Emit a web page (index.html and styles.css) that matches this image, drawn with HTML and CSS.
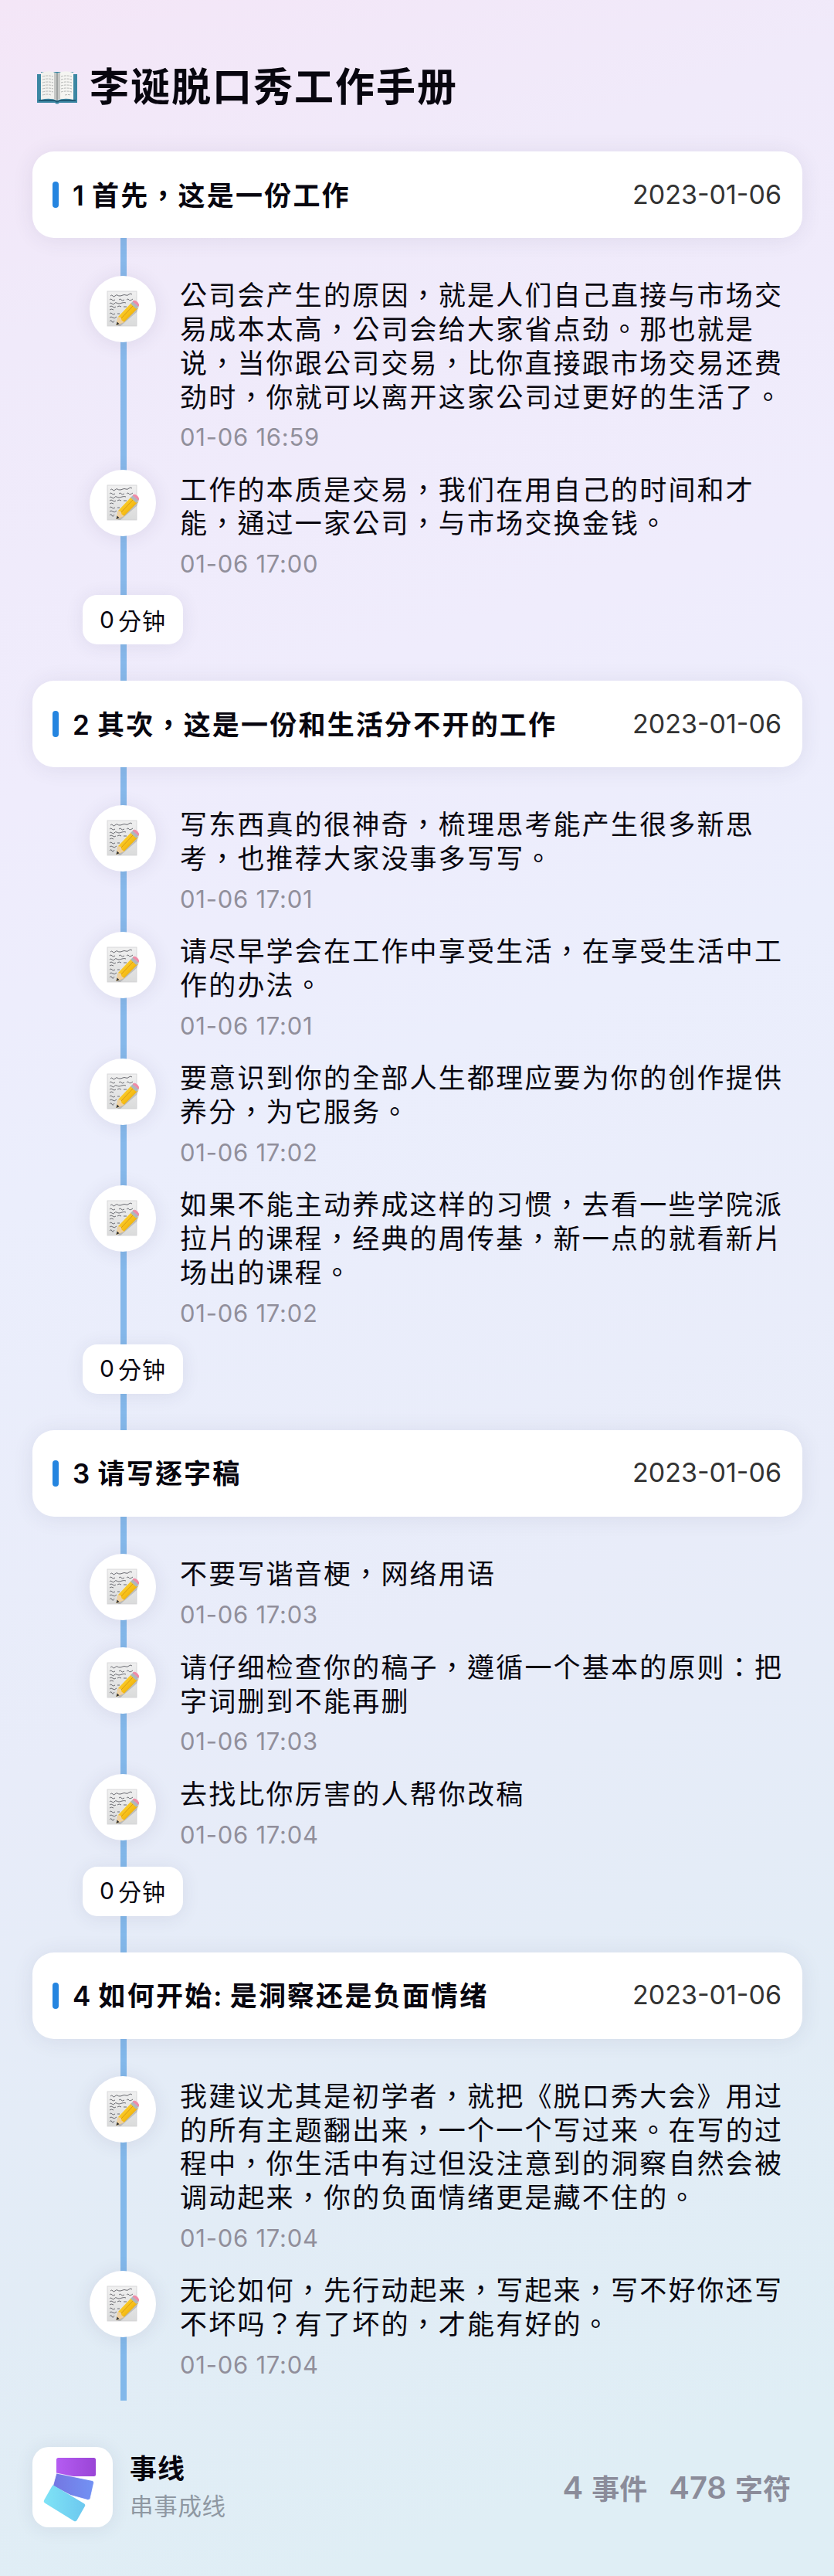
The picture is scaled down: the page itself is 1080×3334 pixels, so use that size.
FILE: index.html
```html
<!DOCTYPE html>
<html lang="zh-TW">
<head>
<meta charset="utf-8">
<title>李诞脱口秀工作手册</title>
<link rel="stylesheet" href="styles.css">
</head>
<body>
<svg class="defs" width="0" height="0">
  <defs>
    <linearGradient id="pencil" x1="0" y1="0" x2="1" y2="1"><stop offset="0" stop-color="#ffdf45"/><stop offset=".55" stop-color="#f6bd16"/><stop offset="1" stop-color="#b97a10"/></linearGradient>
    <linearGradient id="sheet" x1="0" y1="0" x2="0" y2="1"><stop offset="0" stop-color="#f0f0f0"/><stop offset="1" stop-color="#dadbdb"/></linearGradient>
    <symbol id="memo" viewBox="0 0 42 48">
      <rect x="1" y="1" width="38" height="45" fill="url(#sheet)" stroke="#d2d3d4" stroke-width=".8"/>
      <g fill="none" stroke="#6b6c72" stroke-width="1">
        <path d="M5 7q2-2 3 0t3 0 3-1 3 1 4-1 4 0 4-1 4 0"/>
        <path d="M4 12q2-2 3 0t4 0M16 12q2-2 3 0t4 0M26 12q2-2 3 0t5-1"/>
        <path d="M4 17q1-2 3 0t3 0 3-1 3 1 4-1 5 0"/>
        <path d="M4 21q2-2 4 0t4 0M14 21q2-2 5 0M22 21h4"/>
        <path d="M4 25q2-2 5 0"/>
        <path d="M4 30q2-2 3 0t4 0M14 30h3"/>
        <path d="M4 35q2-2 4 0t5-1M4 40q2-3 3 0t3-1"/>
      </g>
      <path d="M14 46l23-22 5-3-3 7-21 18z" fill="#6b6b6b" opacity=".3"/>
      <path d="M12.500 45l2.500-11 17-18 8.500 7-18 18z" fill="url(#pencil)"/>
      <path d="M12.500 45l2.500-11 3.500 1 1 3.500 3.500 2.500z" fill="#efd0a0"/>
      <path d="M12.500 45l1.100-4.500 3 2.700z" fill="#333"/>
      <path d="M31 17l3-3 7.500 6.500-3 3.500z" fill="#aeb7bd"/>
      <path d="M34 14q2.500-2 5.500 .8t1.800 5.500z" fill="#ef8ba6" stroke="#ef8ba6"/>
      <path d="M19 36l15-16" stroke="#d99a14" stroke-width="1"/>
    </symbol>
  </defs>
</svg>
<main class="page">
  <h1 class="title">
    <svg class="book" viewBox="0 0 52 44">
      <path d="M0 5h5V2h42v3h5v37H29q-3 3-6 0H0z" fill="#3c87a3"/>
      <path d="M2 38h21q3 3 6 0h21v2H29q-3 3-6 0H2z" fill="#205a73"/>
      <path d="M5 3q12-4 21 1v35q-9-4-21-1z" fill="#f1f1ee"/>
      <path d="M47 3q-12-4-21 1v35q9-4 21-1z" fill="#f5f5f2"/>
      <path d="M22 3q3 0 4 2 1-2 4-2v34q-3 0-4 2-1-2-4-2z" fill="#c5c7c5"/>
      <path d="M26 4v35" stroke="#777c7c"/>
      <path d="M7 8q7-2 14 0M7 12q7-2 14 0M7 16q7-2 14 0M7 20q7-2 14 0M7 24q7-2 14 0M7 28q7-2 14 0M7 32q7-2 11 0M31 8q7-2 14 0M31 12q7-2 14 0M31 16q7-2 14 0M31 20q7-2 14 0M31 24q7-2 14 0M31 28q7-2 14 0M36 32q4-1 8 0" fill="none" stroke="#b4b6b5" stroke-dasharray="3 1"/>
    </svg>
    <span>李诞脱口秀工作手册</span>
  </h1>

  <div class="timeline">
    <section class="chapter">
      <header class="card"><h2>1 首先，这是一份工作</h2><time>2023-01-06</time></header>
      <article class="note"><div class="dot"><svg><use href="#memo"/></svg></div><div class="body"><p>公司会产生的原因，就是人们自己直接与市场交<br>易成本太高，公司会给大家省点劲。那也就是<br>说，当你跟公司交易，比你直接跟市场交易还费<br>劲时，你就可以离开这家公司过更好的生活了。</p><time>01-06 16:59</time></div></article>
      <article class="note"><div class="dot"><svg><use href="#memo"/></svg></div><div class="body"><p>工作的本质是交易，我们在用自己的时间和才<br>能，通过一家公司，与市场交换金钱。</p><time>01-06 17:00</time></div></article>
      <div class="gap"><b>0</b>分钟</div>
    </section>

    <section class="chapter">
      <header class="card"><h2>2 其次，这是一份和生活分不开的工作</h2><time>2023-01-06</time></header>
      <article class="note"><div class="dot"><svg><use href="#memo"/></svg></div><div class="body"><p>写东西真的很神奇，梳理思考能产生很多新思<br>考，也推荐大家没事多写写。</p><time>01-06 17:01</time></div></article>
      <article class="note"><div class="dot"><svg><use href="#memo"/></svg></div><div class="body"><p>请尽早学会在工作中享受生活，在享受生活中工<br>作的办法。</p><time>01-06 17:01</time></div></article>
      <article class="note"><div class="dot"><svg><use href="#memo"/></svg></div><div class="body"><p>要意识到你的全部人生都理应要为你的创作提供<br>养分，为它服务。</p><time>01-06 17:02</time></div></article>
      <article class="note"><div class="dot"><svg><use href="#memo"/></svg></div><div class="body"><p>如果不能主动养成这样的习惯，去看一些学院派<br>拉片的课程，经典的周传基，新一点的就看新片<br>场出的课程。</p><time>01-06 17:02</time></div></article>
      <div class="gap"><b>0</b>分钟</div>
    </section>

    <section class="chapter">
      <header class="card"><h2>3 请写逐字稿</h2><time>2023-01-06</time></header>
      <article class="note"><div class="dot"><svg><use href="#memo"/></svg></div><div class="body"><p>不要写谐音梗，网络用语</p><time>01-06 17:03</time></div></article>
      <article class="note"><div class="dot"><svg><use href="#memo"/></svg></div><div class="body"><p>请仔细检查你的稿子，遵循一个基本的原则：把<br>字词删到不能再删</p><time>01-06 17:03</time></div></article>
      <article class="note"><div class="dot"><svg><use href="#memo"/></svg></div><div class="body"><p>去找比你厉害的人帮你改稿</p><time>01-06 17:04</time></div></article>
      <div class="gap"><b>0</b>分钟</div>
    </section>

    <section class="chapter">
      <header class="card"><h2>4 如何开始: 是洞察还是负面情绪</h2><time>2023-01-06</time></header>
      <article class="note"><div class="dot"><svg><use href="#memo"/></svg></div><div class="body"><p>我建议尤其是初学者，就把《脱口秀大会》用过<br>的所有主题翻出来，一个一个写过来。在写的过<br>程中，你生活中有过但没注意到的洞察自然会被<br>调动起来，你的负面情绪更是藏不住的。</p><time>01-06 17:04</time></div></article>
      <article class="note"><div class="dot"><svg><use href="#memo"/></svg></div><div class="body"><p>无论如何，先行动起来，写起来，写不好你还写<br>不坏吗？有了坏的，才能有好的。</p><time>01-06 17:04</time></div></article>
    </section>
  </div>

  <footer class="footer">
    <div class="logo">
      <svg viewBox="0 0 104 104">
        <defs>
          <linearGradient id="g1"><stop offset="0" stop-color="#b55cf2"/><stop offset="1" stop-color="#9a45d6"/></linearGradient>
          <linearGradient id="g2"><stop offset="0" stop-color="#7476e2"/><stop offset="1" stop-color="#7292f4"/></linearGradient>
          <linearGradient id="g3"><stop offset="0" stop-color="#7fe3f6"/><stop offset="1" stop-color="#6cc8ef"/></linearGradient>
        </defs>
        <rect x="31" y="14" width="51" height="24" rx="2.500" fill="url(#g1)"/>
        <path d="M31 34l46.500 9.500q2.500.8 2 3l-4.500 20q-1 2.500-3.500 2l-22-6-23-12z" fill="url(#g2)" stroke="#fff" stroke-width=".8" stroke-linejoin="round"/>
        <path d="M28 50l38.500 23q2.500 1.500 1.500 3.500L57.500 95q-1.500 2-3.500 1L16 72.500q-2-1.500-1-3.500L25.500 50.500q1-1.500 2.500-.5z" fill="url(#g3)"/>
      </svg>
    </div>
    <div class="brand"><strong>事线</strong><span>串事成线</span></div>
    <div class="stats"><span><b>4</b>事件</span><span><b>478</b>字符</span></div>
  </footer>
</main>
</body>
</html>
```

FILE: styles.css
```css
* { box-sizing: border-box; }

body {
  margin: 0;
  color: #08060f;
  font-family: Inter, "Noto Sans CJK TC", sans-serif;
  background: linear-gradient(160deg, #f4e6f7 0, #f0eafa 12%, #efecfc 28%, #ebeefc 42%, #e8ecf9 62%, #e2ecf6 80%, #dfeef5 94%);
}

h1, h2, p { margin: 0; }
.defs { display: block; height: 0; }

.page {
  height: 3334px;
  padding: 80px 41px 0 42px;
}

.title {
  display: flex;
  align-items: center;
  height: 66px;
  padding-left: 6px;
  font-size: 51px;
  font-weight: 600;
  letter-spacing: 2px;
  line-height: 66px;
}
.book { width: 52px; height: 44px; margin-right: 16px; }

/* The rail runs behind every card, dot and chip. */
.timeline {
  height: 2911px;
  margin-top: 50px;
  background: linear-gradient(#88b8ea, #82b8ea) 114px 0 / 8px 100% no-repeat;
}

.card {
  display: flex;
  align-items: center;
  height: 112px;
  margin-bottom: 48.500px;
  padding: 0 27px 0 26px;
  border-radius: 28px;
  background: #fff;
  box-shadow: 0 2px 28px rgba(60, 50, 90, .09);
}
.card::before {
  content: "";
  width: 8px;
  height: 34px;
  margin-right: 18px;
  border-radius: 4px;
  background: #2585e0;
}
.card h2 {
  flex: 1;
  padding-bottom: 4px;
  font-size: 35px;
  font-weight: 600;
  letter-spacing: 2.200px;
  word-spacing: -3px;
  white-space: nowrap;
}
.card time { padding-bottom: 2px; color: #333; font-size: 34px; }

.note { display: flex; min-height: 121px; padding: 0 0 24.200px 74px; }
.dot {
  display: flex;
  align-items: center;
  justify-content: center;
  width: 86px;
  height: 86px;
  margin-right: 31px;
  border-radius: 50%;
  background: #fff;
  box-shadow: 0 2px 24px rgba(60, 50, 90, .1);
}
.dot svg { width: 42px; height: 48px; }
.body { flex: 1; }
.body p {
  font-size: 35px;
  line-height: 43.850px;
  letter-spacing: 2.200px;
  padding-top: 4.500px;
  white-space: nowrap;
}
.body time {
  display: block;
  height: 47.500px;
  padding-top: 12px;
  color: #918f9b;
  font-size: 31px;
  line-height: 35.500px;
  letter-spacing: .75px;
}

.gap {
  display: flex;
  align-items: center;
  justify-content: center;
  width: 130px;
  height: 64px;
  margin: -1.500px 0 47px 65px;
  padding-bottom: 1px;
  border-radius: 19px;
  background: #fff;
  font-size: 30px;
  letter-spacing: 1px;
  box-shadow: 0 2px 24px rgba(60, 50, 90, .09);
}
.gap b { margin-right: 4px; font-weight: 400; }

.footer { display: flex; align-items: center; height: 104px; margin-top: 60px; }
.logo {
  width: 104px;
  height: 104px;
  border-radius: 21px;
  background: #fff;
  box-shadow: 0 2px 24px rgba(40, 60, 90, .09);
}
.logo svg { display: block; }
.brand { display: flex; flex-direction: column; flex: 1; gap: 4px; margin-left: 22px; }
.brand strong { font-size: 35px; line-height: 46px; letter-spacing: 1px; }
.brand span { color: #8f98a2; font-size: 30.500px; line-height: 44px; letter-spacing: .7px; }
.stats { display: flex; gap: 28px; margin-right: 15px; color: #8b8c9a; font-size: 36px; font-weight: 600; }
.stats span { display: flex; align-items: center; }
.stats b { margin-right: 11px; font-size: 40px; font-weight: 600; }
```
